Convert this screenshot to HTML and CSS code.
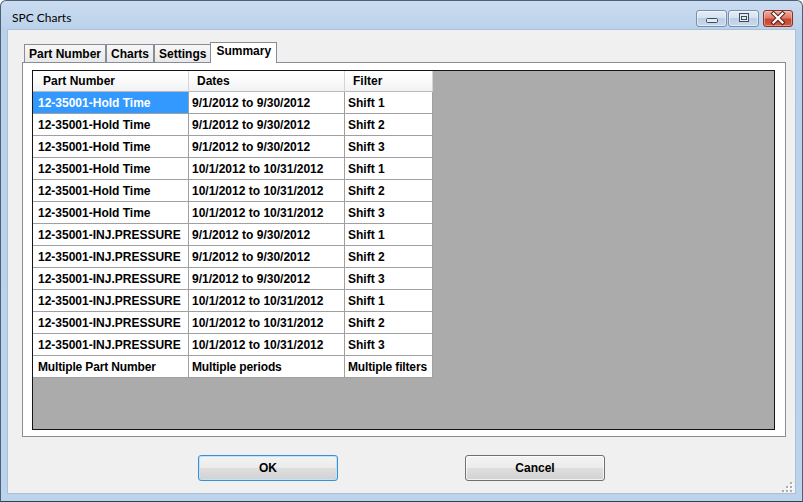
FILE: index.html
```html
<!DOCTYPE html>
<html>
<head>
<meta charset="utf-8">
<title>SPC Charts</title>
<link rel="stylesheet" href="styles.css">
</head>
<body>
<div class="window">
  <div class="titlebar">
    <span class="title">SPC Charts</span>
    <div class="caption">
      <div class="cbtn">
        <svg width="30" height="17" viewBox="0 0 30 17"><rect x="9.5" y="8.5" width="11" height="4" rx="1" fill="#e4eaf1" stroke="#3d4c5c"/></svg>
      </div>
      <div class="cbtn">
        <svg width="30" height="17" viewBox="0 0 30 17"><rect x="10.5" y="3.5" width="9" height="8" fill="#e4eaf1" stroke="#3d4c5c"/><rect x="12.5" y="6.5" width="5" height="3" fill="#e4eaf1" stroke="#3d4c5c"/></svg>
      </div>
      <div class="cbtn close">
        <svg width="30" height="17" viewBox="0 0 30 17"><path d="M10.5 3.5 L19.5 12.5 M19.5 3.5 L10.5 12.5" stroke="#5a2018" stroke-width="4.2" stroke-linecap="square"/><path d="M10.5 3.5 L19.5 12.5 M19.5 3.5 L10.5 12.5" stroke="#ffffff" stroke-width="2.2" stroke-linecap="square"/></svg>
      </div>
    </div>
  </div>
  <div class="client">
    <div class="tabs">
      <div class="tab">Part Number</div>
      <div class="tab">Charts</div>
      <div class="tab">Settings</div>
      <div class="tab active">Summary</div>
    </div>
    <div class="tabpage">
      <div class="grid">
        <div class="table">
          <div class="cell head first">Part Number</div>
          <div class="cell head">Dates</div>
          <div class="cell head">Filter</div>

          <div class="cell first selected">12-35001-Hold Time</div>
          <div class="cell">9/1/2012 to 9/30/2012</div>
          <div class="cell">Shift 1</div>

          <div class="cell first">12-35001-Hold Time</div>
          <div class="cell">9/1/2012 to 9/30/2012</div>
          <div class="cell">Shift 2</div>

          <div class="cell first">12-35001-Hold Time</div>
          <div class="cell">9/1/2012 to 9/30/2012</div>
          <div class="cell">Shift 3</div>

          <div class="cell first">12-35001-Hold Time</div>
          <div class="cell">10/1/2012 to 10/31/2012</div>
          <div class="cell">Shift 1</div>

          <div class="cell first">12-35001-Hold Time</div>
          <div class="cell">10/1/2012 to 10/31/2012</div>
          <div class="cell">Shift 2</div>

          <div class="cell first">12-35001-Hold Time</div>
          <div class="cell">10/1/2012 to 10/31/2012</div>
          <div class="cell">Shift 3</div>

          <div class="cell first">12-35001-INJ.PRESSURE</div>
          <div class="cell">9/1/2012 to 9/30/2012</div>
          <div class="cell">Shift 1</div>

          <div class="cell first">12-35001-INJ.PRESSURE</div>
          <div class="cell">9/1/2012 to 9/30/2012</div>
          <div class="cell">Shift 2</div>

          <div class="cell first">12-35001-INJ.PRESSURE</div>
          <div class="cell">9/1/2012 to 9/30/2012</div>
          <div class="cell">Shift 3</div>

          <div class="cell first">12-35001-INJ.PRESSURE</div>
          <div class="cell">10/1/2012 to 10/31/2012</div>
          <div class="cell">Shift 1</div>

          <div class="cell first">12-35001-INJ.PRESSURE</div>
          <div class="cell">10/1/2012 to 10/31/2012</div>
          <div class="cell">Shift 2</div>

          <div class="cell first">12-35001-INJ.PRESSURE</div>
          <div class="cell">10/1/2012 to 10/31/2012</div>
          <div class="cell">Shift 3</div>

          <div class="cell first small">Multiple Part Number</div>
          <div class="cell small">Multiple periods</div>
          <div class="cell small">Multiple filters</div>
        </div>
      </div>
    </div>
    <div class="actions">
      <button class="btn default">OK</button>
      <button class="btn">Cancel</button>
    </div>
    <svg class="grip" width="11" height="11" viewBox="0 0 11 11">
      <g fill="#ffffff"><rect x="9" y="2" width="2" height="2"/><rect x="9" y="6" width="2" height="2"/><rect x="9" y="10" width="2" height="1"/><rect x="5" y="6" width="2" height="2"/><rect x="5" y="10" width="2" height="1"/><rect x="1" y="10" width="2" height="1"/></g>
      <g fill="#a9acb0"><rect x="8" y="1" width="2" height="2"/><rect x="8" y="5" width="2" height="2"/><rect x="8" y="9" width="2" height="2"/><rect x="4" y="5" width="2" height="2"/><rect x="4" y="9" width="2" height="2"/><rect x="0" y="9" width="2" height="2"/></g>
    </svg>
  </div>
</div>
</body>
</html>
```

FILE: styles.css
```css
* {
  box-sizing: border-box;
}

html, body {
  margin: 0;
  padding: 0;
}

body {
  width: 803px;
  height: 502px;
  overflow: hidden;
  background: #ffffff;
  font-family: "Liberation Sans", Arial, sans-serif;
}

.window {
  width: 803px;
  height: 502px;
  border: 1px solid #4e6076;
  border-bottom-color: #24465a;
  border-radius: 6px 6px 0 0;
  background: linear-gradient(#cadcf0 0px, #bad1ea 30px, #bcd3ec 100%);
  display: flex;
  flex-direction: column;
}

.titlebar {
  height: 29px;
  flex: none;
  display: flex;
  justify-content: space-between;
  align-items: flex-start;
  padding: 0 9px 0 11px;
}

.title {
  font-family: Lato, "Liberation Sans", sans-serif;
  font-size: 12px;
  line-height: 15px;
  margin-top: 9px;
  color: #000000;
}

.caption {
  display: flex;
  margin-top: 9px;
}

.cbtn {
  width: 31px;
  height: 17px;
  border: 1px solid #7990ad;
  border-radius: 3px;
  background: linear-gradient(#e6eef7 0%, #d4e2f0 45%, #bccfe5 50%, #c9daed 100%);
  box-shadow: inset 0 0 0 1px rgba(255, 255, 255, 0.45);
  margin-right: 1px;
  display: flex;
  align-items: center;
  justify-content: center;
  overflow: hidden;
}

.cbtn svg {
  flex: none;
}

.cbtn.close {
  width: 30px;
  margin-left: 3px;
  margin-right: 0;
  border-color: #8a2f22;
  background: linear-gradient(#eab0a2 0%, #de7c6c 45%, #c9452f 55%, #d05a44 100%);
  box-shadow: inset 0 0 0 1px rgba(255, 220, 210, 0.45);
}

.client {
  position: relative;
  height: 463px;
  margin: 0 7px;
  flex: none;
  background: #f0f0f0;
  padding: 12px 9px 0 14px;
  display: flex;
  flex-direction: column;
  box-shadow: 0 0 0 1px #a9c0d9;
}

.tabs {
  position: relative;
  z-index: 1;
  height: 20px;
  display: flex;
  align-items: flex-end;
  padding-left: 2px;
}

.tab {
  height: 18px;
  padding: 0 4px;
  border: 1px solid #898c95;
  border-bottom: none;
  background: linear-gradient(#f7f7f7, #e8e8e8);
  font-size: 12px;
  font-weight: bold;
  line-height: 18px;
  color: #000000;
  white-space: nowrap;
}

.tab.active {
  position: relative;
  z-index: 2;
  height: 21px;
  margin: 0 -2px -1px -1px;
  padding: 0 5px;
  line-height: 17px;
  background: #ffffff;
}

.tabpage {
  height: 375px;
  flex: none;
  border: 1px solid #898c95;
  background: #ffffff;
  padding: 7px 10px 0 9px;
}

.grid {
  height: 360px;
  border: 1px solid #141414;
  background: #ababab;
}

.table {
  display: grid;
  width: 400px;
  grid-template-columns: 156px 156px 88px;
  grid-template-rows: 21px;
  grid-auto-rows: 22px;
}

.cell {
  background: #ffffff;
  border-right: 1px solid #a0a0a0;
  border-bottom: 1px solid #a0a0a0;
  font-size: 12px;
  font-weight: bold;
  line-height: 22px;
  color: #000000;
  padding-left: 3px;
  white-space: nowrap;
  overflow: hidden;
}

.cell.first {
  padding-left: 5px;
}

.cell.head {
  background: linear-gradient(#ffffff 0%, #fbfbfb 45%, #f1f2f3 100%);
  border-right-color: #d5d5d5;
  border-bottom-color: #b9b9b9;
  line-height: 21px;
  padding-left: 8px;
}

.cell.head.first {
  padding-left: 10px;
}

.cell.small {
  letter-spacing: -0.15px;
}

.cell.selected {
  background: #3399ff;
  color: #ffffff;
}

.actions {
  display: flex;
  gap: 127px;
  padding-left: 176px;
  margin-top: 18px;
}

.btn {
  width: 140px;
  height: 26px;
  padding: 0;
  border: 1px solid #707070;
  border-radius: 3px;
  background: linear-gradient(#f3f3f3 0%, #ececec 48%, #dedede 52%, #d2d2d2 100%);
  box-shadow: inset 0 0 0 1px rgba(255, 255, 255, 0.7);
  font-family: "Liberation Sans", Arial, sans-serif;
  font-size: 12px;
  font-weight: bold;
  color: #000000;
}

.btn.default {
  border-color: #3c8fd0;
  box-shadow: inset 0 0 0 1px #bfe3f8;
}

.grip {
  position: absolute;
  right: 2px;
  bottom: 1px;
}
```
